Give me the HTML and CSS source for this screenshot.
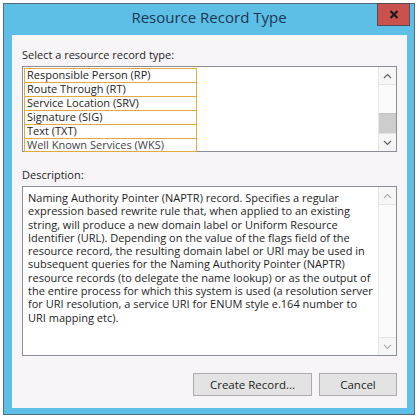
FILE: index.html
```html
<!DOCTYPE html>
<html lang="en">

<head>
    <meta charset="UTF-8">
    <title>Resource Record Type</title>
    <link rel="stylesheet" href="styles.css">
</head>

<body>
    <div class="window">
        <div class="titlebar">
            <span></span>
            <div class="title">Resource Record Type</div>
            <div class="close">
                <svg width="10" height="9" viewBox="0 0 10 9">
                    <path d="M1.5 1 L8.5 8 M8.5 1 L1.5 8" stroke="#1a1a1a" stroke-width="2.2" />
                </svg>
            </div>
        </div>
        <div class="panel">
            <div class="label first">Select a resource record type:</div>
            <div class="listbox">
                <div class="items">
                    <div class="item">Responsible Person (RP)</div>
                    <div class="item">Route Through (RT)</div>
                    <div class="item">Service Location (SRV)</div>
                    <div class="item">Signature (SIG)</div>
                    <div class="item">Text (TXT)</div>
                    <div class="item last">Well Known Services (WKS)</div>
                </div>
                <div class="scrollbar">
                    <div class="arrow">
                        <svg width="9" height="6" viewBox="0 0 9 6"><polyline points="1,5 4.5,1.5 8,5" fill="none" stroke="#606060" stroke-width="1.2" /></svg>
                    </div>
                    <div class="track">
                        <div class="thumb"></div>
                    </div>
                    <div class="arrow">
                        <svg width="9" height="6" viewBox="0 0 9 6"><polyline points="1,1 4.5,4.5 8,1" fill="none" stroke="#606060" stroke-width="1.2" /></svg>
                    </div>
                </div>
            </div>
            <div class="label">Description:</div>
            <div class="descbox">
                <div class="desctext">Naming Authority Pointer (NAPTR) record. Specifies a regular<br>
                    expression based rewrite rule that, when applied to an existing<br>
                    string, will produce a new domain label or Uniform Resource<br>
                    Identifier (URL). Depending on the value of the flags field of the<br>
                    resource record, the resulting domain label or URI may be used in<br>
                    subsequent queries for the Naming Authority Pointer (NAPTR)<br>
                    resource records (to delegate the name lookup) or as the output of<br>
                    the entire process for which this system is used (a resolution server<br>
                    for URI resolution, a service URI for ENUM style e.164 number to<br>
                    URI mapping etc).</div>
                <div class="scrollbar disabled">
                    <div class="arrow">
                        <svg width="9" height="6" viewBox="0 0 9 6"><polyline points="1,5 4.5,1.5 8,5" fill="none" stroke="#b0b0b0" stroke-width="1.2" /></svg>
                    </div>
                    <div class="track"></div>
                    <div class="arrow">
                        <svg width="9" height="6" viewBox="0 0 9 6"><polyline points="1,1 4.5,4.5 8,1" fill="none" stroke="#b0b0b0" stroke-width="1.2" /></svg>
                    </div>
                </div>
            </div>
            <div class="buttons">
                <div class="button create">Create Record...</div>
                <div class="button cancel">Cancel</div>
            </div>
        </div>
    </div>
</body>

</html>
```

FILE: styles.css
```css
body {
    margin: 0;
    background: #ffffff;
    font-family: "Open Sans", "Noto Sans", sans-serif;
    font-size: 11px;
    color: #1e1e1e;
}

.window {
    margin: 3px;
    width: 412px;
    height: 412px;
    box-sizing: border-box;
    border: 1px solid #4f6b7c;
    background: #5dbfe6;
    display: flex;
    flex-direction: column;
}

.titlebar {
    height: 31px;
    display: grid;
    grid-template-columns: 1fr auto 1fr;
    align-items: start;
}

.title {
    margin-top: 3px;
    font-size: 15px;
    line-height: 20px;
    color: #1c3650;
}

.close {
    justify-self: end;
    margin-top: -1px;
    margin-right: 4px;
    width: 33px;
    height: 23px;
    box-sizing: border-box;
    border: 1px solid #5a4a52;
    background: #c9524f;
    display: flex;
    align-items: center;
    justify-content: center;
}

.panel {
    margin: 0 7px 6px 8px;
    height: 373px;
    box-sizing: border-box;
    background: #f8f5f8;
    padding: 12px 10px 12px 10px;
    display: flex;
    flex-direction: column;
}

.label {
    line-height: 15px;
    margin-top: 15px;
}

.label.first {
    margin-top: 0;
}

.listbox {
    margin-top: 4px;
    height: 86px;
    box-sizing: border-box;
    border: 1px solid #8a8d94;
    background: #ffffff;
    display: flex;
}

.items {
    flex: 1;
    padding: 1px 0 0 1px;
}

.item {
    width: 173px;
    height: 14px;
    box-sizing: border-box;
    border: 1px solid #e3a93f;
    border-bottom: none;
    padding-left: 2px;
    line-height: 12px;
    white-space: nowrap;
}

.item.last {
    border-bottom: 1px solid #e3a93f;
    color: #444444;
}

.scrollbar {
    width: 17px;
    display: flex;
    flex-direction: column;
    background: #f6f6f6;
    border-left: 1px solid #e6e6e6;
}

.arrow {
    height: 17px;
    display: flex;
    align-items: center;
    justify-content: center;
    background: #f6f6f6;
}

.track {
    flex: 1;
    background: #fbfbfb;
    border-top: 1px solid #e4e4e4;
    border-bottom: 1px solid #e4e4e4;
}

.thumb {
    margin-top: 28px;
    height: 19px;
    background: #cdcdcd;
    border-top: 1px solid #c2c2c2;
}

.descbox {
    margin-top: 4px;
    height: 170px;
    box-sizing: border-box;
    border: 1px solid #8a8d94;
    background: #ffffff;
    display: flex;
}

.desctext {
    flex: 1;
    padding: 4px 0 0 5px;
    line-height: 13.3px;
    white-space: nowrap;
    overflow: hidden;
}

.buttons {
    margin-top: 17px;
    display: flex;
    justify-content: flex-end;
    gap: 7px;
}

.button {
    height: 23px;
    box-sizing: border-box;
    border: 1px solid #acacac;
    background: #e3e3e3;
    display: flex;
    align-items: center;
    justify-content: center;
    font-size: 11.5px;
}

.create {
    width: 119px;
}

.cancel {
    width: 78px;
}
```
